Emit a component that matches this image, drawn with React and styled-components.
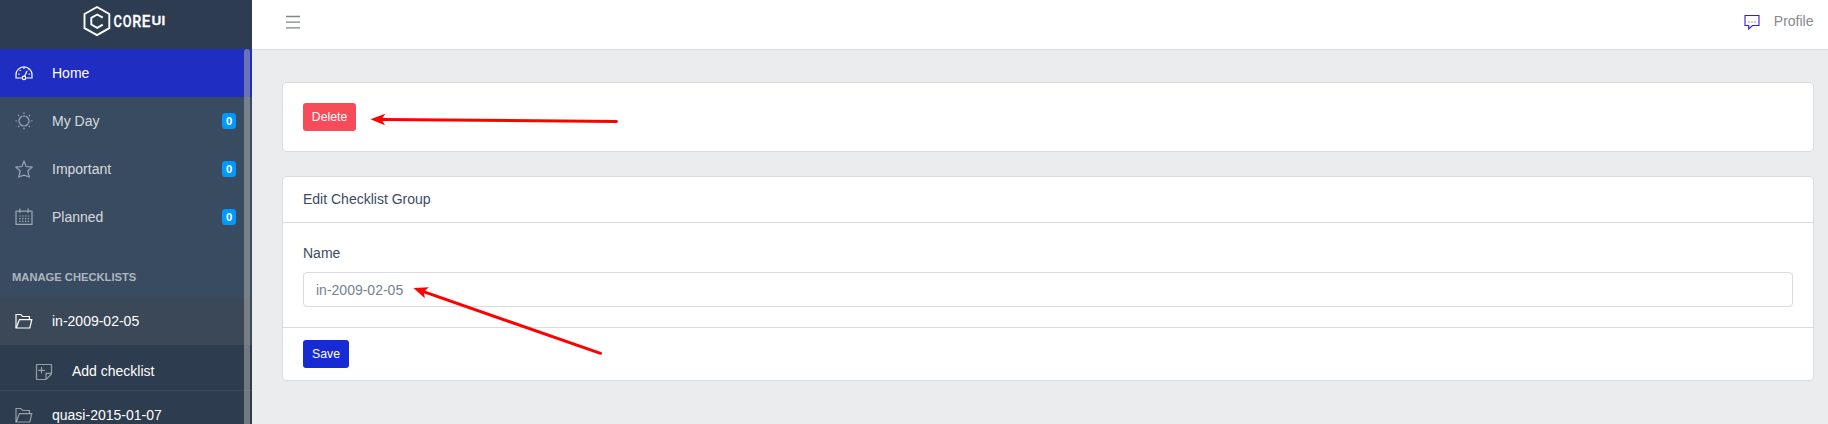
import React from "react";
import styled, { createGlobalStyle, css } from "styled-components";

const GlobalStyle = createGlobalStyle`
  *, *::before, *::after { box-sizing: border-box; }
  body {
    margin: 0;
    overflow: hidden;
    background: #ebecee;
    color: #3c4b64;
    font: 400 14px/21px "Liberation Sans", Arial, sans-serif;
  }
`;

const Page = styled.div`
  position: relative;
  display: flex;
  height: 424px;
  overflow: hidden;
`;

const Sidebar = styled.aside`
  position: relative;
  display: flex;
  flex-direction: column;
  flex: 0 0 252px;
  background: #394b61;
  overflow: hidden;
`;

const Brand = styled.div`
  display: flex;
  flex: 0 0 49px;
  height: 49px;
  background: #2e3c51;
`;

const Scrollbar = styled.div`
  position: absolute;
  top: 49px;
  bottom: 0;
  right: 2px;
  width: 6px;
  border-radius: 3px 3px 0 0;
  background: rgba(170, 170, 170, 0.56);
`;

const NavItem = styled.a`
  display: flex;
  align-items: center;
  flex: 0 0 ${(p) => (p.$nested ? 46 : 48)}px;
  padding: ${(p) => (p.$nested ? "8px 16px 0 35px" : "0 16px 0 15px")};
  color: ${(p) => (p.$bright ? "#fff" : "rgba(255, 255, 255, 0.8)")};
  background: ${(p) => p.$bg || "transparent"};
  ${(p) => p.$nested && css`border-bottom: 1px solid #394b61;`}
`;

const NavIcon = styled.svg`
  flex: 0 0 18px;
  width: 18px;
  height: 18px;
  margin-right: 19px;
  fill: none;
  stroke: ${(p) => (p.$active ? "#fff" : "rgba(255, 255, 255, 0.5)")};
  stroke-width: 1.2;
`;

const Label = styled.span`
  flex: 1;
`;

const Badge = styled.span`
  width: 14px;
  height: 16px;
  border-radius: 3.5px;
  background: #0099ff;
  color: #fff;
  font-size: 11.2px;
  font-weight: 700;
  line-height: 16px;
  text-align: center;
`;

const NavTitle = styled.div`
  flex: 0 0 56px;
  padding: 26px 12px 0;
  color: rgba(255, 255, 255, 0.6);
  font-size: 11.2px;
  font-weight: 700;
  line-height: 21px;
`;

const Main = styled.div`
  display: flex;
  flex: 1;
  flex-direction: column;
  min-width: 0;
`;

const Header = styled.header`
  display: flex;
  align-items: center;
  justify-content: space-between;
  height: 50px;
  padding: 0 14px 7px 34px;
  border-bottom: 1px solid #d8dbe0;
  background: #fff;
`;

const MenuIcon = styled.svg`
  width: 14px;
  height: 14px;
  margin-top: 1px;
`;

const Profile = styled.div`
  display: flex;
  align-items: center;
  gap: 14px;
  padding-right: 0.5px;
  color: #868b91;
`;

const CommentIcon = styled.svg`
  width: 18px;
  height: 18px;
`;

const Content = styled.main`
  display: flex;
  flex: 1;
  flex-direction: column;
  gap: 24px;
  padding: 32px 14px 0 30px;
  background: #ebecee;
`;

const Card = styled.section`
  border: 1px solid #d8dbe0;
  border-radius: 4px;
  background: #fff;
`;

const CardHeader = styled.div`
  padding: 12px 20px;
  border-bottom: 1px solid #d8dbe0;
`;

const CardBody = styled.div`
  padding: 20px;
`;

const CardFooter = styled.div`
  padding: 12px 20px;
  border-top: 1px solid #d8dbe0;
`;

const FieldLabel = styled.label`
  display: block;
  margin-bottom: 8px;
`;

const Input = styled.input`
  display: block;
  width: 100%;
  height: 35px;
  padding: 0 12px;
  border: 1px solid #d8dbe0;
  border-radius: 4px;
  background: #fff;
  color: #768192;
  font: inherit;
  outline: none;
`;

const Button = styled.button`
  display: block;
  width: ${(p) => p.$width}px;
  height: 28px;
  padding: 0;
  border: 0;
  border-radius: 3px;
  background: ${(p) => (p.$danger ? "#f84b59" : "#172bd4")};
  color: #fff;
  font: 12.25px/26px "Liberation Sans", Arial, sans-serif;
`;

const Annotations = styled.svg`
  position: absolute;
  top: 0;
  left: 0;
  pointer-events: none;
`;

const Logo = () => (
  <svg width="252" height="49" viewBox="0 0 252 49" fill="none">
    <path d="M97 7 109.3 14v14.2L97 35.2 84.5 28.2V14Z" stroke="#fff" strokeWidth="1.9" />
    <path d="M102.8 17.6 97.2 14.5 91.3 17.8v6.7l5.9 3.3 5.6-3.1" stroke="#fff" strokeWidth="1.9" />
    <g fill="#fff" stroke="#fff" strokeWidth="0.3" fontFamily="Roboto, sans-serif" fontWeight="500">
      <g fontSize="16.4">
        <text x="113.6" y="26.7" textLength="8.4" lengthAdjust="spacingAndGlyphs">C</text>
        <text x="122.8" y="26.7" textLength="8.8" lengthAdjust="spacingAndGlyphs">O</text>
        <text x="132.2" y="26.7" textLength="9" lengthAdjust="spacingAndGlyphs">R</text>
        <text x="141.8" y="26.7" textLength="8.6" lengthAdjust="spacingAndGlyphs">E</text>
      </g>
      <text x="151.4" y="24.7" fontSize="13.6" textLength="14" lengthAdjust="spacingAndGlyphs">UI</text>
    </g>
  </svg>
);

const icons = {
  speedometer: (
    <>
      <path d="M6.8 14H1V10.8a8 8 0 0 1 16 0V14H11.2" />
      <circle cx="9" cy="13.9" r="1.7" />
      <path d="M9.6 12.2 12 7M9 3.6v1.5M4.7 5.9l.9.9M3.2 10.2h1.3M13.6 10.2h1.3M13 5.6l.5.5" />
    </>
  ),
  sun: (
    <>
      <circle cx="9" cy="9" r="5" />
      <path d="M9 .4v1.8M9 15.8v1.8M.4 9h1.8M15.8 9h1.8M3 3l1.1 1.1M13.9 13.9 15 15M3 15l1.1-1.1M13.9 4.1 15 3" />
    </>
  ),
  star: <path d="m9 1.3 2.1 5.2 5.9.6-4.2 3.9 1.4 5.9L9 15.1l-5.2 1.8L5.2 11 1 7.1l5.9-.6Z" />,
  calendar: (
    <>
      <path d="M1 3.1h16v13.3H1ZM4.9.5v4.4M13.1.5v4.4" />
      <path d="M4.3 8h10M4.3 10.7h10M4.3 13.4h10" strokeDasharray="1.4 1.4" />
    </>
  ),
  folder: (
    <>
      <path d="M1 16V2.5h4.7l2 2h6.7v3" />
      <path d="M1.2 16 4.4 7.6h12.4L14.8 16Z" />
    </>
  ),
  note: <path d="M1.5 1.5h15v9.4l-5.5 5.6H1.5ZM17 10.4h-6v6.2M6.5 4v6.6M3.2 7.3h6.6" />,
};

const Icon = ({ name, active }) => (
  <NavIcon viewBox="0 0 18 18" $active={active}>{icons[name]}</NavIcon>
);

export default function App() {
  return (
    <>
      <GlobalStyle />
      <Page>
        <Sidebar>
          <Brand><Logo /></Brand>
          <NavItem $bright $bg="#202dc3"><Icon name="speedometer" active /><Label>Home</Label></NavItem>
          <NavItem><Icon name="sun" /><Label>My Day</Label><Badge>0</Badge></NavItem>
          <NavItem><Icon name="star" /><Label>Important</Label><Badge>0</Badge></NavItem>
          <NavItem><Icon name="calendar" /><Label>Planned</Label><Badge>0</Badge></NavItem>
          <NavTitle>MANAGE CHECKLISTS</NavTitle>
          <NavItem $bright $bg="#3b4857"><Icon name="folder" active /><Label>in-2009-02-05</Label></NavItem>
          <NavItem $bright $nested $bg="#2d3c4e"><Icon name="note" /><Label>Add checklist</Label></NavItem>
          <NavItem $bright $bg="#2d3c4e"><Icon name="folder" /><Label>quasi-2015-01-07</Label></NavItem>
          <Scrollbar />
        </Sidebar>
        <Main>
          <Header>
            <MenuIcon viewBox="0 0 14 14">
              <path d="M0 1.5h14M0 7.2h14M0 12.8h14" stroke="#7e858f" strokeWidth="1.3" />
            </MenuIcon>
            <Profile>
              <CommentIcon viewBox="0 0 18 18" fill="none" stroke="#321fdb" strokeWidth="1.1">
                <path d="M3 3.5h14v10h-6.5L6.7 17v-3.5H3Z" />
                <path d="M6 10h8" strokeDasharray="2 1" strokeWidth="1.6" strokeOpacity=".35" />
              </CommentIcon>
              <span>Profile</span>
            </Profile>
          </Header>
          <Content>
            <Card>
              <CardBody><Button $danger $width={53}>Delete</Button></CardBody>
            </Card>
            <Card>
              <CardHeader>Edit Checklist Group</CardHeader>
              <CardBody>
                <FieldLabel htmlFor="name">Name</FieldLabel>
                <Input id="name" defaultValue="in-2009-02-05" />
              </CardBody>
              <CardFooter><Button $width={46}>Save</Button></CardFooter>
            </Card>
          </Content>
        </Main>
        <Annotations width="1828" height="424" viewBox="0 0 1828 424" fill="#f00" stroke="#f00">
          <path d="M382 119.5 616.5 121.5M422 291.2 600.5 353.3" strokeWidth="3" strokeLinecap="round" />
          <path d="M370.5 119.3 385.3 113.7 381.5 119.5 385 125.3ZM413.5 288 429 287.2 423.8 291.6 424.8 298.2Z" stroke="none" />
        </Annotations>
      </Page>
    </>
  );
}
